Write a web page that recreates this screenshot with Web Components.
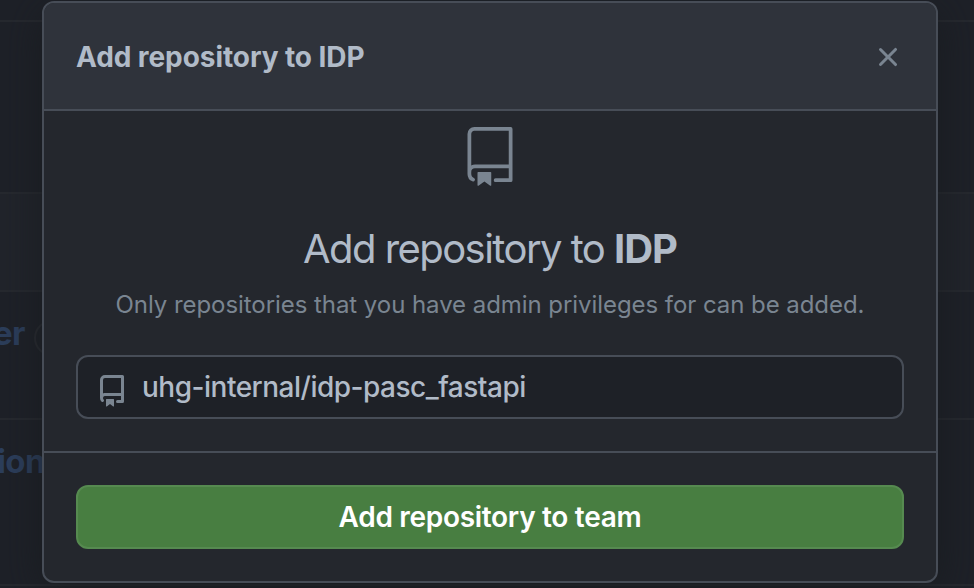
<!DOCTYPE html>
<html lang="en">
<head>
<meta charset="utf-8">
<title>Add repository to IDP</title>
<style>
html, body { margin: 0; height: 100%; overflow: hidden; background: #1d2026; }
body { font-family: Inter, "Liberation Sans", sans-serif; }
</style>
</head>
<body>
<team-page></team-page>
<script>
const define = (name, html, setup) => {
  const template = document.createElement('template');
  template.innerHTML = html;
  customElements.define(name, class extends HTMLElement {
    constructor() {
      super();
      this.attachShadow({ mode: 'open' }).append(template.content.cloneNode(true));
    }
    connectedCallback() { if (setup) setup(this, this.shadowRoot); }
  });
};

const icons = {
  repo: [16, 'M2 2.5A2.5 2.5 0 014.5 0h8.75a.75.75 0 01.75.75v12.5a.75.75 0 01-.75.75h-2.5a.75.75 0 110-1.5h1.75v-2h-8a1 1 0 00-.714 1.7.75.75 0 01-1.072 1.05A2.495 2.495 0 012 11.5v-9zm10.5-1V9h-8c-.356 0-.694.074-1 .208V2.5a1 1 0 011-1h8zM5 12.25v3.25a.25.25 0 00.4.2l1.45-1.087a.25.25 0 01.3 0L8.6 15.7a.25.25 0 00.4-.2v-3.25a.25.25 0 00-.25-.25h-3.5a.25.25 0 00-.25.25z'],
  'repo-large': [24, 'M3 2.75A2.75 2.75 0 015.75 0h14.5a.75.75 0 01.75.75v20.5a.75.75 0 01-.75.75h-6a.75.75 0 010-1.5h5.25v-4H6A1.5 1.5 0 004.5 18v.75c0 .716.43 1.334 1.05 1.605a.75.75 0 01-.6 1.374A3.25 3.25 0 013 18.75v-16zM19.5 1.5V15H6c-.546 0-1.059.146-1.5.401V2.75c0-.69.56-1.25 1.25-1.25H19.5zM7 18.25a.25.25 0 01.25-.25h5a.25.25 0 01.25.25v5.01a.25.25 0 01-.397.201l-2.206-1.604a.25.25 0 00-.294 0L7.397 23.46a.25.25 0 01-.397-.2v-5.01z'],
  x: [16, 'M3.72 3.72a.75.75 0 011.06 0L8 6.94l3.22-3.22a.75.75 0 111.06 1.06L9.06 8l3.22 3.22a.75.75 0 11-1.06 1.06L8 9.06l-3.22 3.22a.75.75 0 01-1.06-1.06L6.94 8 3.72 4.78a.75.75 0 010-1.06z']
};

define('oct-icon', `
<style>
:host { display: block; flex: none; width: 32px; height: 32px; color: #7a8591; }
svg { display: block; width: 100%; height: 100%; fill: currentColor; }
</style>
<svg aria-hidden="true"><path fill-rule="evenodd"></path></svg>`, (host, root) => {
  const [size, d] = icons[host.getAttribute('name')];
  root.querySelector('svg').setAttribute('viewBox', `0 0 ${size} ${size}`);
  root.querySelector('path').setAttribute('d', d);
});

define('list-row', `
<style>
:host { display: flex; align-items: flex-start; box-sizing: border-box; border-bottom: 2px solid #26292f;
  color: #2c3e5b; font-size: 33px; font-weight: 700; line-height: 42px; letter-spacing: -0.6px; white-space: nowrap; }
</style><slot></slot>`);

define('count-pill', `
<style>
:host { display: block; box-sizing: border-box; width: 90px; height: 36px; margin: 8px 0 0 9px;
  border: 2px solid #282b31; border-radius: 18px; }
</style>`);

define('dialog-header', `
<style>
:host { display: flex; align-items: center; justify-content: space-between; box-sizing: border-box; height: 108px;
  padding: 2px 32px 0 32px; background: #2f333b; border-bottom: 2px solid #474d57; }
h3 { margin: 0; font-size: 28px; font-weight: 650; line-height: 42px; letter-spacing: var(--ls-header); color: #b1bbc8; white-space: nowrap; }
</style>
<h3><slot></slot></h3><oct-icon name="x"></oct-icon>`);

define('repo-field', `
<style>
:host { display: flex; align-items: center; box-sizing: border-box; height: 64px; padding: 0 18px; gap: 14px;
  background: #1e2127; border: 2px solid #474d57; border-radius: 12px; color: #b1bbc8;
  font-size: 28px; font-weight: 450; line-height: 40px; letter-spacing: var(--ls-field); white-space: nowrap; }
oct-icon { margin-top: 7px; }
</style>
<oct-icon name="repo"></oct-icon><span><slot></slot></span>`);

define('primary-button', `
<style>
:host { display: block; }
button { display: block; box-sizing: border-box; width: 100%; height: 64px; padding: 0; border: 2px solid #568a50; border-radius: 12px;
  background: #487e41; color: #fff; font: 600 28px/40px Inter, "Liberation Sans", sans-serif; letter-spacing: var(--ls-button); }
</style>
<button type="button"><slot></slot></button>`);

define('add-dialog', `
<style>
:host { display: flex; flex-direction: column; box-sizing: border-box; overflow: hidden;
  --ls-header: -0.08px; --ls-title: -1.55px; --ls-sub: -0.06px; --ls-field: -0.5px; --ls-button: -0.3px;
  background: #24272d; border: 2px solid #474d57; border-radius: 12px; box-shadow: 0 10px 40px rgba(23,25,28,.7); }
.content { display: flex; flex-direction: column; align-items: center; flex: none; box-sizing: border-box; height: 342px; padding: 16px 32px 0;
  border-bottom: 2px solid #474d57; }
.mark { width: 60px; height: 60px; }
h2 { margin: 32px 0 0; font-size: 40px; font-weight: 430; line-height: 60px; letter-spacing: var(--ls-title); color: #b1bbc8; white-space: nowrap; }
h2 b { font-weight: 650; letter-spacing: -1px; }
p { margin: 8px 0 0; font-size: 24px; font-weight: 430; line-height: 36px; letter-spacing: var(--ls-sub); color: #7a8591; white-space: nowrap; }
repo-field { align-self: stretch; margin-top: 32px; }
.footer { padding: 32px; }
</style>
<dialog-header>Add repository to IDP</dialog-header>
<div class="content">
  <oct-icon class="mark" name="repo-large"></oct-icon>
  <h2>Add repository to <b>IDP</b></h2>
  <p>Only repositories that you have admin privileges for can be added.</p>
  <repo-field>uhg-internal/idp-pasc_fastapi</repo-field>
</div>
<div class="footer"><primary-button>Add repository to team</primary-button></div>`);

define('team-page', `
<style>
:host { display: block; position: relative; height: 100%; overflow: hidden; background: #1e2128; }
.rows { display: grid; grid-template-rows: 22px 172px 98px 128px 166px; }
.band { background: #21242b; }
.first { padding-top: 20px; }
.second { padding-top: 20px; }
.first span { margin-left: -7px; }
.second span { margin-left: -3px; }
add-dialog { position: absolute; left: 42px; top: 1px; width: 896px; height: 582px; }
</style>
<div class="rows">
  <list-row></list-row>
  <list-row></list-row>
  <list-row class="band"></list-row>
  <list-row class="first"><span>er</span><count-pill></count-pill></list-row>
  <list-row class="second"><span>ion</span></list-row>
</div>
<add-dialog></add-dialog>`);
</script>
</body>
</html>
